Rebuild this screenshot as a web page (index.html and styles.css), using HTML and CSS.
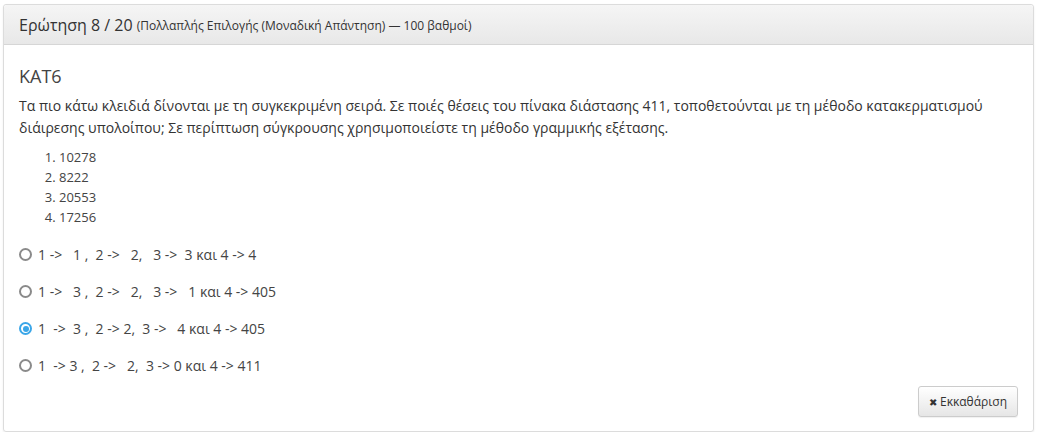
FILE: index.html
```html
<!DOCTYPE html>
<html lang="el">
<head>
<meta charset="utf-8">
<link rel="stylesheet" href="styles.css">
</head>
<body>
<div class="panel">
  <div class="panel-heading">
    <span class="q-title">Ερώτηση 8 / 20</span>
    <small class="q-meta">(Πολλαπλής Επιλογής (Μοναδική Απάντηση) — 100 βαθμοί)</small>
  </div>
  <div class="panel-body">
    <h3 class="q-code">ΚΑΤ6</h3>
    <p class="q-text">Τα πιο κάτω κλειδιά δίνονται με τη συγκεκριμένη σειρά. Σε ποιές θέσεις του πίνακα διάστασης 411, τοποθετούνται με τη μέθοδο κατακερματισμού διάιρεσης υπολοίπου; Σε περίπτωση σύγκρουσης χρησιμοποιείστε τη μέθοδο γραμμικής εξέτασης.</p>
    <ol class="keys">
      <li>10278</li>
      <li>8222</li>
      <li>20553</li>
      <li>17256</li>
    </ol>
    <div class="options">
      <label class="option"><span class="radio"></span><span>1 -&gt;&nbsp;&nbsp; 1 ,&nbsp; 2 -&gt;&nbsp;&nbsp; 2,&nbsp;&nbsp; 3 -&gt;&nbsp; 3 και 4 -&gt; 4</span></label>
      <label class="option"><span class="radio"></span><span>1 -&gt;&nbsp;&nbsp; 3 ,&nbsp; 2 -&gt;&nbsp;&nbsp; 2,&nbsp;&nbsp; 3 -&gt;&nbsp;&nbsp; 1 και 4 -&gt; 405</span></label>
      <label class="option"><span class="radio checked"></span><span>1&nbsp; -&gt;&nbsp; 3 ,&nbsp; 2 -&gt; 2,&nbsp; 3 -&gt;&nbsp;&nbsp; 4 και 4 -&gt; 405</span></label>
      <label class="option"><span class="radio"></span><span>1&nbsp; -&gt; 3 ,&nbsp; 2 -&gt;&nbsp;&nbsp; 2,&nbsp; 3 -&gt; 0 και 4 -&gt; 411</span></label>
    </div>
    <div class="actions">
      <button class="btn"><span class="x">✖</span> Εκκαθάριση</button>
    </div>
  </div>
</div>
</body>
</html>
```
FILE: styles.css
```css
* { box-sizing: border-box; }
body {
  margin: 0;
  padding: 4px 5px 0 3px;
  background: #fff;
  font-family: "Open Sans", "Noto Sans", sans-serif;
  color: #333;
}
.panel {
  border: 1px solid #dcdcdc;
  border-radius: 3px;
  box-shadow: 0 1px 2px rgba(0,0,0,0.08);
  height: 428px;
  display: flex;
  flex-direction: column;
}
.panel-heading {
  height: 40px;
  padding: 0 15px;
  display: flex;
  align-items: center;
  gap: 4px;
  background: linear-gradient(#f5f5f5, #e8e8e8);
  border-bottom: 1px solid #d6d6d6;
  border-radius: 3px 3px 0 0;
}
.q-title { font-size: 16px; color: #333; }
.q-meta { font-size: 12px; color: #333; padding-top: 2px; }
.panel-body {
  padding: 18px 15px 14px 15px;
  flex: 1;
  display: flex;
  flex-direction: column;
}
.q-code {
  margin: 0 0 6px;
  font-size: 18px;
  font-weight: 400;
  color: #444;
  line-height: 26px;
}
.q-text {
  margin: 0 0 8px;
  font-size: 14px;
  line-height: 22px;
  color: #333;
}
.keys {
  margin: 0 0 9px;
  padding-left: 40px;
  font-size: 13px;
  line-height: 20px;
  color: #444;
}
.options { display: flex; flex-direction: column; }
.option {
  display: flex;
  align-items: center;
  gap: 6px;
  height: 37px;
  font-size: 14px;
  color: #444;
}
.radio {
  width: 13px;
  height: 13px;
  border: 2px solid #8a8a8a;
  border-radius: 50%;
  flex: none;
  position: relative;
}
.radio.checked { border-color: #3aa6e8; }
.radio.checked::after {
  content: "";
  position: absolute;
  left: 1.5px; top: 1.5px;
  width: 6px; height: 6px;
  border-radius: 50%;
  background: #3aa6e8;
}
.actions {
  margin-top: auto;
  display: flex;
  justify-content: flex-end;
}
.btn {
  font-family: "Open Sans", "Noto Sans", sans-serif;
  font-size: 12px;
  color: #333;
  height: 31px;
  padding: 0 10px;
  background: linear-gradient(#fff, #e6e6e6);
  border: 1px solid #ccc;
  border-radius: 3px;
  box-shadow: 0 1px 1px rgba(0,0,0,0.06);
}
.x { font-size: 10px; }
```
